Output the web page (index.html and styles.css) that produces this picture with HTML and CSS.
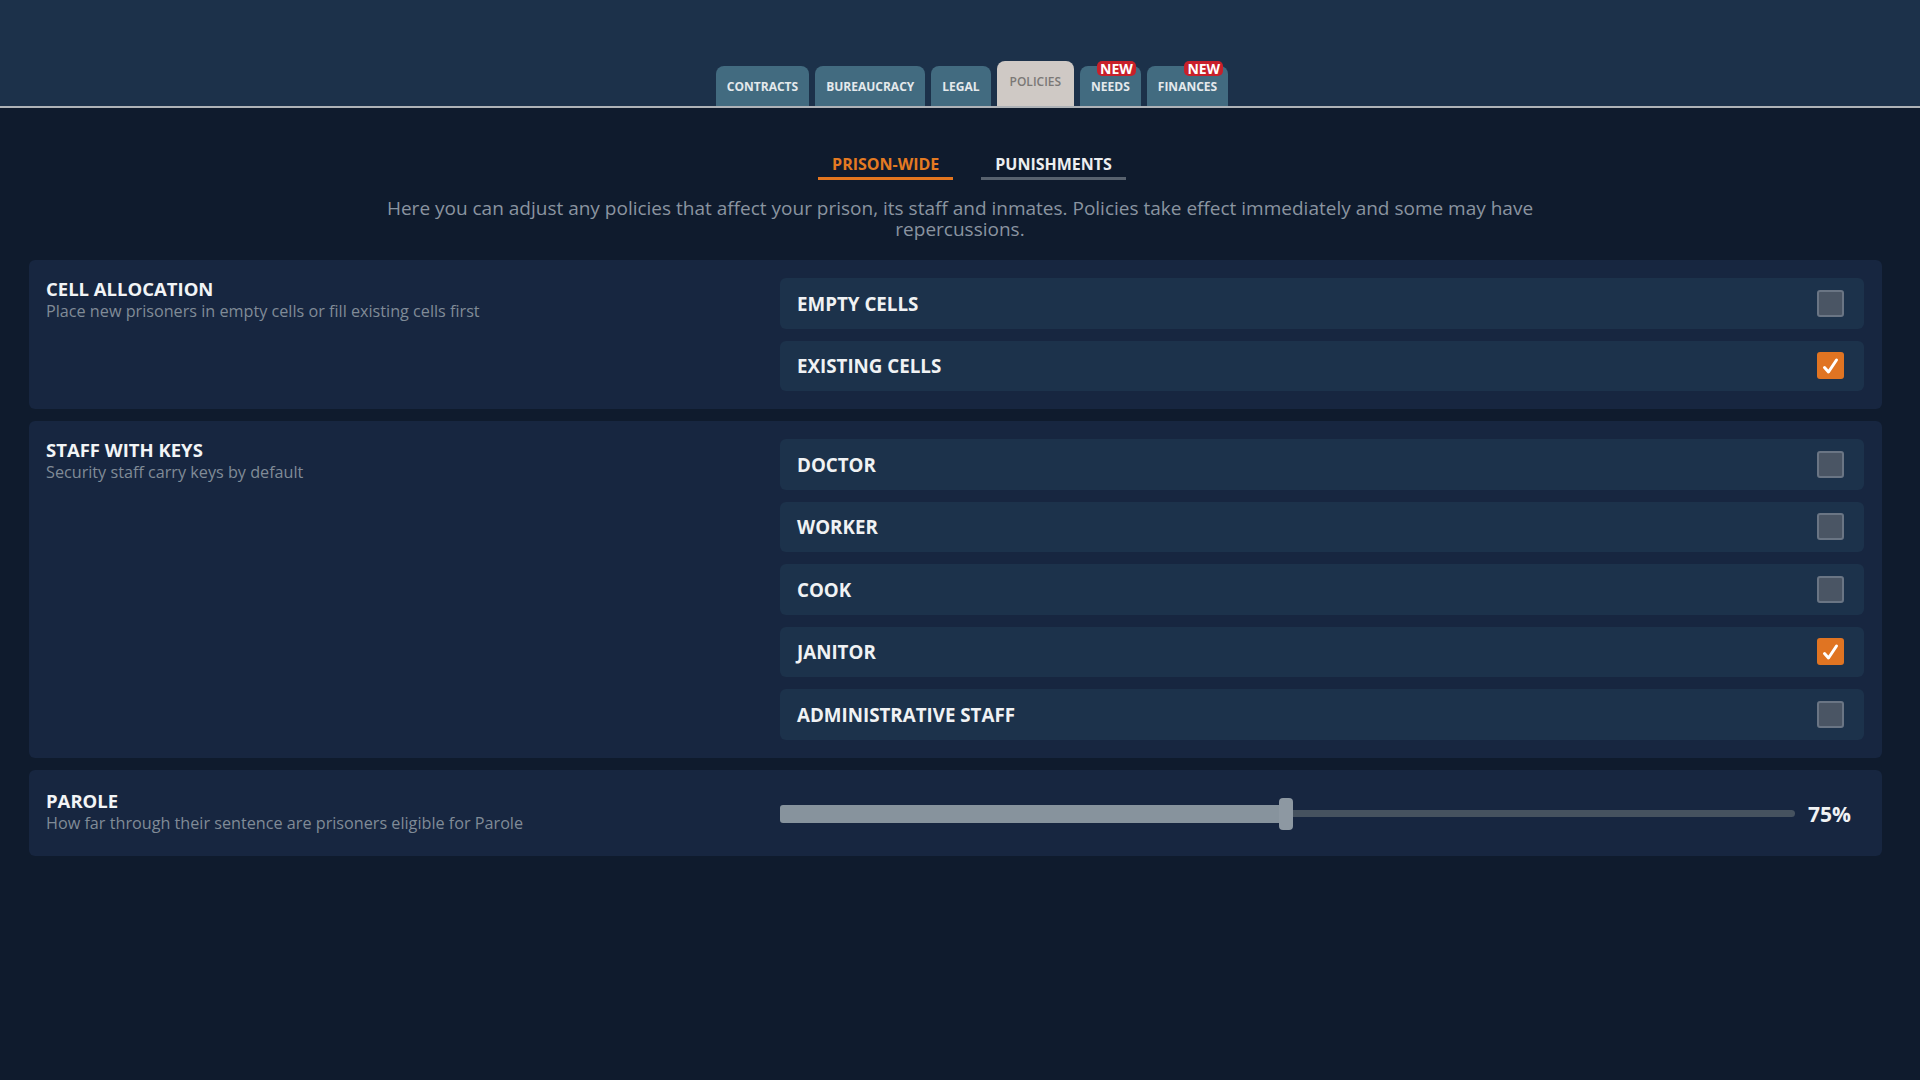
FILE: index.html
```html
<!DOCTYPE html>
<html lang="en">

<head>
  <meta charset="UTF-8">
  <meta name="viewport" content="width=device-width, initial-scale=1.0">
  <title>Policies</title>
  <link rel="stylesheet" href="styles.css">
</head>

<body>
  <div id="header">
    <div class="tabs">
      <div class="tab">CONTRACTS</div>
      <div class="tab">BUREAUCRACY</div>
      <div class="tab">LEGAL</div>
      <div class="tab active">POLICIES</div>
      <div class="tab">NEEDS<span class="badge">NEW</span></div>
      <div class="tab">FINANCES<span class="badge">NEW</span></div>
    </div>
  </div>

  <div class="subtabs">
    <div class="subtab current">PRISON-WIDE</div>
    <div class="subtab">PUNISHMENTS</div>
  </div>

  <p class="intro">Here you can adjust any policies that affect your prison, its staff and inmates. Policies take effect immediately and some may have repercussions.</p>

  <div id="policies">
    <div class="card">
      <div class="info">
        <h2>CELL ALLOCATION</h2>
        <p>Place new prisoners in empty cells or fill existing cells first</p>
      </div>
      <div class="options">
        <div class="option">EMPTY CELLS<span class="box"></span></div>
        <div class="option">EXISTING CELLS<span class="box checked"><svg viewBox="0 0 27 27"><path d="M7.5 15.5 L11.5 20 L19.5 8"/></svg></span></div>
      </div>
    </div>

    <div class="card">
      <div class="info">
        <h2>STAFF WITH KEYS</h2>
        <p>Security staff carry keys by default</p>
      </div>
      <div class="options">
        <div class="option">DOCTOR<span class="box"></span></div>
        <div class="option">WORKER<span class="box"></span></div>
        <div class="option">COOK<span class="box"></span></div>
        <div class="option">JANITOR<span class="box checked"><svg viewBox="0 0 27 27"><path d="M7.5 15.5 L11.5 20 L19.5 8"/></svg></span></div>
        <div class="option">ADMINISTRATIVE STAFF<span class="box"></span></div>
      </div>
    </div>

    <div class="card slim">
      <div class="info">
        <h2>PAROLE</h2>
        <p>How far through their sentence are prisoners eligible for Parole</p>
      </div>
      <div class="slider">
        <div class="track">
          <span class="fill" style="width: 49.2%"></span>
          <span class="thumb"></span>
          <span class="rest"></span>
        </div>
        <span class="value">75%</span>
      </div>
    </div>
  </div>
</body>

</html>
```

FILE: styles.css
```css
* {
  box-sizing: border-box;
}

body {
  margin: 0;
  background: #0f1b2d;
  font-family: "Open Sans", "Noto Sans", sans-serif;
  color: #eef1f3;
  min-height: 1080px;
}

#header {
  height: 108px;
  background: #1c314a;
  border-bottom: 2px solid #aeb2b7;
  display: flex;
  align-items: flex-end;
  justify-content: center;
  padding-left: 24px;
}

.tabs {
  display: flex;
  align-items: flex-end;
  gap: 6px;
}

.tab {
  position: relative;
  height: 40px;
  padding: 0 11px;
  display: flex;
  align-items: center;
  background: #426b80;
  border-radius: 8px 8px 0 0;
  color: #e4e9ec;
  font-size: 12px;
  font-weight: bold;
}

.tab.active {
  height: 45px;
  padding: 0 13px 4px;
  background: #cfc9c5;
  color: #7b7876;
  font-weight: 600;
}

.badge {
  position: absolute;
  top: -5px;
  right: 5px;
  height: 15px;
  padding: 0 3px;
  background: #c8202a;
  border-radius: 5px;
  color: #fff;
  font-size: 14px;
  line-height: 15px;
  font-weight: bold;
}

.subtabs {
  display: flex;
  justify-content: center;
  gap: 28px;
  margin-top: 45px;
  padding-left: 24px;
}

.subtab {
  padding: 0 14px 2px;
  border-bottom: 3px solid #58626e;
  font-size: 16px;
  line-height: 22px;
  font-weight: bold;
  color: #eceef0;
}

.subtab.current {
  color: #e47a22;
  border-bottom-color: #e4761f;
}

.intro {
  width: 1180px;
  margin: 18px auto 20px;
  text-align: center;
  color: #8a94a0;
  font-size: 19px;
  line-height: 21px;
}

#policies {
  display: flex;
  flex-direction: column;
  gap: 12px;
  margin: 0 38px 0 29px;
}

.card {
  display: grid;
  grid-template-columns: 1fr 1084px;
  padding: 18px 18px 18px 17px;
  background: #172640;
  border-radius: 6px;
}

.card.slim {
  align-items: center;
  padding-top: 20px;
  padding-bottom: 21px;
}

.info h2 {
  margin: 0;
  font-size: 18.5px;
  line-height: 21px;
  font-weight: bold;
  color: #f2f4f6;
}

.info p {
  margin: 0;
  font-size: 16.2px;
  line-height: 24px;
  color: #808b97;
}

.options {
  display: flex;
  flex-direction: column;
  gap: 12px;
}

.option {
  height: 50.5px;
  padding: 0 20px 0 17px;
  display: flex;
  align-items: center;
  justify-content: space-between;
  background: #1c324b;
  border-radius: 6px;
  font-size: 18.75px;
  font-weight: bold;
  color: #f0f2f4;
}

.box {
  width: 27px;
  height: 27px;
  border: 2px solid #6a7584;
  border-radius: 3px;
  background: #4a5564;
}

.box.checked {
  border: none;
  background: #e07422;
}

.box svg {
  display: block;
  width: 27px;
  height: 27px;
  fill: none;
  stroke: #fff;
  stroke-width: 3;
  stroke-linecap: round;
  stroke-linejoin: round;
}

.slider {
  display: flex;
  align-items: center;
  padding-right: 13px;
  padding-top: 3px;
}

.track {
  flex: 1;
  display: flex;
  align-items: center;
  height: 32px;
}

.fill {
  height: 18px;
  background: #87939d;
  border-radius: 3px 0 0 3px;
}

.thumb {
  width: 14px;
  height: 32px;
  background: #8d98a2;
  border-radius: 4px;
}

.rest {
  flex: 1;
  height: 7px;
  background: #46525f;
  border-radius: 0 4px 4px 0;
}

.value {
  margin-left: 13px;
  font-size: 21px;
  font-weight: bold;
  color: #f0f2f4;
}
```
